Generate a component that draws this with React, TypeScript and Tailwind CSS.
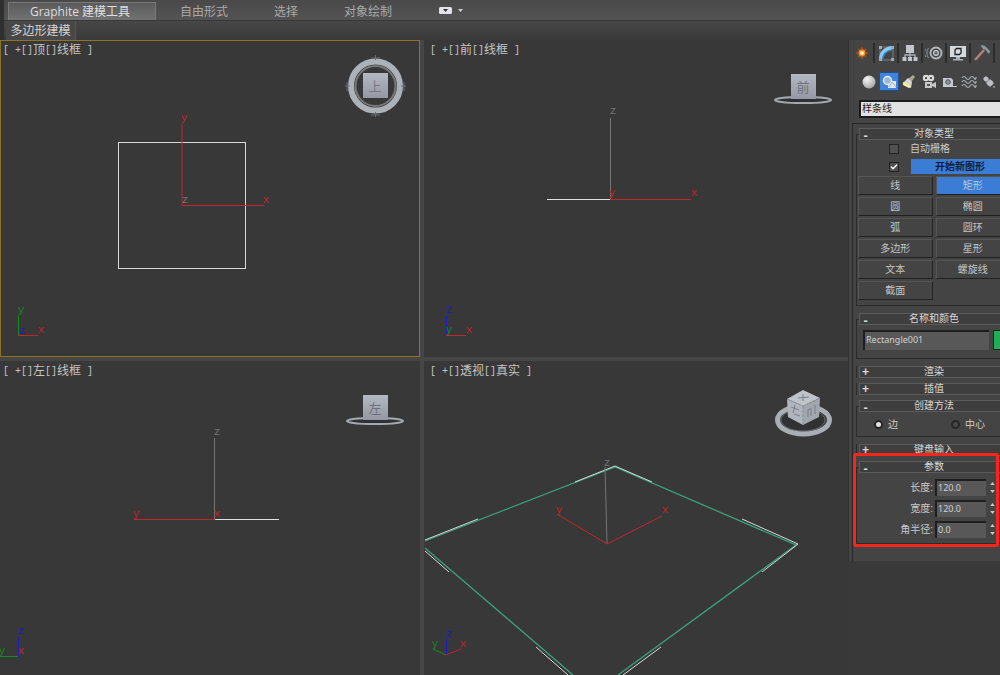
import React, { useState } from 'react';
import { Check } from 'lucide-react';
import { clsx } from 'clsx';

const CJK = "font-['Liberation_Sans','Noto_Sans_CJK_SC',sans-serif]";
const LATIN = "font-['Noto_Sans','Noto_Sans_CJK_SC',sans-serif]";

const RED = '#c2252a';
const GREEN = '#128a1c';
const BLUE = '#1d1dc4';
const GRAY = '#747474';

type Point = [number, number];

interface AxisProps {
  from?: Point;
  to?: Point;
  label: string;
  at: Point;
  color: string;
}

function Axis({ from, to, label, at, color }: AxisProps) {
  return (
    <g>
      {from && to && <line x1={from[0]} y1={from[1]} x2={to[0]} y2={to[1]} stroke={color} />}
      <text
        x={at[0]}
        y={at[1]}
        fill={color}
        textAnchor="middle"
        dominantBaseline="central"
        className="font-['Liberation_Mono',monospace] text-[11px]"
      >
        {label}
      </text>
    </g>
  );
}

function FlatCube({ x, y, face }: { x: number; y: number; face: string }) {
  return (
    <g>
      <ellipse cx={x} cy={y + 14} rx="28" ry="3" fill="#2f3033" stroke="#a4a8af" strokeWidth="2" />
      <rect x={x - 12} y={y - 12} width="25" height="25" fill="url(#cubeFace)" />
      <text x={x} y={y + 1} fill="#6f727b" textAnchor="middle" dominantBaseline="central" className={clsx(CJK, 'text-[13px]')}>
        {face}
      </text>
    </g>
  );
}

interface ViewportProps {
  name: string;
  mode: string;
  active?: boolean;
  inset?: boolean;
  children: React.ReactNode;
}

function Viewport({ name, mode, active, inset, children }: ViewportProps) {
  return (
    <section className={clsx('relative min-w-0 overflow-hidden bg-[#383838]', active && 'ring-1 ring-inset ring-[#8c7423]')}>
      <svg className="absolute inset-0 h-full w-full" fill="none">
        {children}
      </svg>
      <h2
        className={clsx(
          "relative flex pt-[3px] font-['Liberation_Mono','Noto_Sans_CJK_SC',monospace] text-[10px] leading-4 whitespace-pre text-[#c4c4c4]",
          inset ? 'pl-[6px]' : 'pl-[3px]'
        )}
      >
        [ +[]<span className="text-xs leading-4">{name}</span>[]<span className="text-xs leading-4">{mode}</span> ]
      </h2>
    </section>
  );
}

function TopView() {
  return (
    <Viewport name="顶" mode="线框" active>
      <defs>
        <linearGradient id="cubeFace" x1="0" y1="0" x2="0" y2="1">
          <stop offset="0" stopColor="#b4b8c2" />
          <stop offset="1" stopColor="#9598a2" />
        </linearGradient>
      </defs>
      <rect x="118.5" y="102.5" width="127" height="126" stroke="#d8d8d8" />
      <Axis label="z" at={[185, 160]} color={GRAY} />
      <Axis from={[182, 165.5]} to={[182, 84]} label="y" at={[184, 78]} color={RED} />
      <Axis from={[182, 165.5]} to={[264, 165.5]} label="x" at={[266, 160]} color={RED} />
      <Axis from={[18.5, 296]} to={[18.5, 276]} label="y" at={[21, 270]} color={GREEN} />
      <Axis from={[18, 295.5]} to={[38, 295.5]} label="x" at={[41, 290]} color={RED} />
      <Axis label="z" at={[22, 291]} color={BLUE} />
      {/* compass ring */}
      <circle cx="375.5" cy="46" r="20" stroke="#77797d" strokeWidth="2" />
      <circle cx="375.5" cy="46" r="24.5" stroke="#adb2b8" strokeWidth="6" />
      <path d="M375.5 15v5M371 18h9M375.5 72v5M371 75h9M345 46h5M347 42v9M401 46h5M404 42v9" stroke="#6a6e74" />
      <rect x="363" y="33" width="25" height="25" fill="url(#cubeFace)" />
      <text x="375" y="46" fill="#777a84" textAnchor="middle" dominantBaseline="central" className={clsx(CJK, 'text-[13px]')}>
        上
      </text>
    </Viewport>
  );
}

function FrontView() {
  return (
    <Viewport name="前" mode="线框" inset>
      <path d="M123 159.5H186" stroke="#e0e0e0" />
      <Axis from={[186.5, 159]} to={[186.5, 78]} label="z" at={[189, 71]} color={GRAY} />
      <Axis from={[186, 159.5]} to={[267, 159.5]} label="x" at={[270, 153]} color={RED} />
      <Axis label="y" at={[188, 153]} color={RED} />
      <Axis from={[22.5, 296]} to={[22.5, 276]} label="z" at={[25, 270]} color={BLUE} />
      <Axis from={[22, 295.5]} to={[42, 295.5]} label="x" at={[45, 290]} color={RED} />
      <Axis label="y" at={[25, 290]} color={GREEN} />
      <FlatCube x={379} y={46} face="前" />
    </Viewport>
  );
}

function LeftView() {
  return (
    <Viewport name="左" mode="线框">
      <path d="M215 158.5H279" stroke="#e0e0e0" />
      <Axis from={[214.5, 158]} to={[214.5, 77]} label="z" at={[217, 71]} color={GRAY} />
      <Axis from={[215, 158.5]} to={[134, 158.5]} label="y" at={[136, 153]} color={RED} />
      <Axis label="x" at={[217, 153]} color={RED} />
      <Axis from={[18.5, 296]} to={[18.5, 276]} label="z" at={[21, 270]} color={BLUE} />
      <Axis from={[18, 295.5]} to={[0, 295.5]} label="y" at={[2, 290]} color={GREEN} />
      <Axis label="x" at={[21, 290]} color={RED} />
      <FlatCube x={375} y={46} face="左" />
    </Viewport>
  );
}

function PerspectiveView() {
  return (
    <Viewport name="透视" mode="真实" inset>
      <path d="M1 180 191 106 372 184 194 314M1 187 149 314" stroke="#3da17c" strokeWidth="1.3" />
      <path
        d="M151 121 191 105 228 121M318 158 374 183 338 211M54 158 1 179M1 190 25 211M112 286 144 314M237 286 199 314"
        stroke="#d3dcd8"
      />
      <Axis from={[183, 183]} to={[181, 106]} label="z" at={[183, 102]} color={GRAY} />
      <Axis from={[183, 183]} to={[133, 153]} label="y" at={[135, 149]} color={RED} />
      <Axis from={[183, 183]} to={[238, 155]} label="x" at={[241, 149]} color={RED} />
      <Axis from={[22.5, 294]} to={[22.5, 278]} label="z" at={[25, 273]} color={BLUE} />
      <Axis from={[22, 294]} to={[9, 288]} label="y" at={[11, 283]} color={GREEN} />
      <Axis from={[22, 294]} to={[37, 288]} label="x" at={[39, 283]} color={RED} />
      {/* view cube on its compass */}
      <ellipse cx="379" cy="59" rx="22" ry="11" fill="#303133" stroke="#696b70" />
      <ellipse cx="379.5" cy="59" rx="26" ry="14" stroke="#a9aeb4" strokeWidth="5" />
      <path d="M379 29 363 38 379 45 396 37Z" fill="#bfc3ca" />
      <path d="M363 38 379 45V64L364 56Z" fill="#b0b4bc" />
      <path d="M396 37 379 45V64L395 56Z" fill="#a2a6af" />
      <path d="M363 38 379 45 396 37M379 45V64" stroke="#888c95" strokeDasharray="3 1" />
      <path
        d="M374 37 385 36M379 33V40M367 46 375 49M371 44 369 52M370 53 376 55M384 48V56M384 49 387 47V55M391 44V53"
        stroke="#7b7f88"
      />
    </Viewport>
  );
}

function Ribbon() {
  const tabs = [
    { name: '自由形式', pad: 'ml-6' },
    { name: '选择', pad: 'ml-[46px]' },
    { name: '对象绘制', pad: 'ml-[46px]' },
  ];
  return (
    <header className="shrink-0 border-l-4 border-[#2f2f2f] bg-[#424242]">
      <nav className="flex h-[21px] items-stretch border-b border-[#383838] bg-gradient-to-b from-[#494949] to-[#535353] pl-1 text-xs text-[#a9a9a9]">
        <button className="mt-[2px] w-[148px] border border-b-0 border-[#797979] bg-gradient-to-b from-[#5b5b5b] to-[#727272] pr-1 font-['Open_Sans','Noto_Sans_CJK_SC',sans-serif] leading-4 text-[#dedede]">
          Graphite 建模工具
        </button>
        {tabs.map((tab) => (
          <button key={tab.name} className={clsx(tab.pad, 'pt-[3px] leading-4')}>
            {tab.name}
          </button>
        ))}
        <button aria-label="显示选项" className="ml-[47px] flex items-center gap-[6px]">
          <svg width="13" height="7" viewBox="0 0 13 7">
            <rect width="13" height="7" rx="1.5" fill="#e2e2e8" />
            <path d="M4 2h5L6.5 5Z" fill="#333" />
          </svg>
          <svg width="5" height="3" viewBox="0 0 5 3">
            <path d="M0 0h5L2.5 3Z" fill="#ccc" />
          </svg>
        </button>
      </nav>
      <div className="flex h-[19px] bg-gradient-to-b from-[#474747] to-[#3a3a3a] pl-[2px]">
        <button className="w-[70px] border-r border-[#555] bg-[#484848] text-xs leading-4 text-[#d4d4d4]">多边形建模</button>
      </div>
    </header>
  );
}

const panelTabs = [
  {
    name: '创建',
    icon: (
      <>
        <circle cx="9" cy="9" r="5.5" fill="#a04a12" opacity=".45" />
        <path d="M9 3v12M3 9h12M5 5l8 8M13 5l-8 8" stroke="#b8642a" strokeWidth=".8" />
        <circle cx="9" cy="9" r="3.4" fill="#f08a2c" />
        <circle cx="9" cy="9" r="2" fill="#ffeaa0" />
      </>
    ),
  },
  {
    name: '修改',
    icon: (
      <>
        <path d="M3 3h13M3 3v13M3 16h13V3" stroke="#8b98a0" strokeWidth=".7" />
        <path d="M4 16C4 9 8 5 15 4" stroke="#8fc9ee" strokeWidth="4" />
        <path d="M5.5 16C6 10 9 7 15 6" stroke="#2e7fc0" strokeWidth="1.5" />
        <path d="M2 2h3v3H2zM14 2h3v3h-3zM2 14h3v3H2zM14 14h3v3h-3z" fill="#9fa9ae" />
      </>
    ),
  },
  {
    name: '层次',
    icon: (
      <>
        <path d="M5 1h8v8H5z" fill="#c3c6ca" />
        <path d="M9 9v5M4 14v-3h10v3" stroke="#a9adb0" strokeWidth="1.3" />
        <path d="M1.5 13h4v4h-4zM7 13h4v4H7zM12.5 13h4v4h-4z" fill="#c3c6ca" />
      </>
    ),
  },
  {
    name: '运动',
    icon: (
      <>
        <path d="M1 5c-2 3-2 5 0 8M3.5 4c-2 3-2 7 0 10" stroke="#8196a3" />
        <circle cx="11" cy="9" r="5.5" stroke="#b4bcc2" strokeWidth="1.8" />
        <circle cx="11" cy="9" r="2.4" stroke="#c9ced2" strokeWidth="1.2" fill="#666" />
      </>
    ),
  },
  {
    name: '显示',
    icon: (
      <>
        <path d="M1 2h16v11H1z" fill="#d5d9dc" />
        <path d="M6 6l1.5-1.5H12V9l-1.5 1.5H6z" fill="#d5d9dc" stroke="#222" strokeWidth="1.3" />
        <path d="M7 13h4v2H7zM4 15h10v1.5H4z" fill="#a9b4bb" />
      </>
    ),
  },
  {
    name: '实用程序',
    icon: (
      <>
        <path d="M2 16 11 6" stroke="#b58078" strokeWidth="2.5" />
        <path d="M6 3l3-2 3 1 5 5-1 3-2-2-1-2-3-1-2-3Z" fill="#8f989c" />
      </>
    ),
  },
];

const categories = [
  { name: '几何体', icon: <circle cx="9" cy="9" r="6.5" fill="url(#ball)" /> },
  {
    name: '图形',
    icon: (
      <>
        <path d="M8 8h8v7H8z" fill="#dfe6ee" />
        <circle cx="7.5" cy="7.5" r="4" fill="#9db7d8" stroke="#e9edf2" strokeWidth="1.5" />
        <path d="M9 14 12 9l4 5" stroke="#9eb3c8" />
      </>
    ),
  },
  {
    name: '灯光',
    icon: (
      <>
        <path d="M13 2l2 2-4 5-3-3Z" fill="#a8a89c" />
        <path d="M8 5l4 4-1 6-8-5Z" fill="#dedacb" />
        <path d="M3 9l8 5-2 1-6-3Z" fill="#fff3a8" />
      </>
    ),
  },
  {
    name: '摄影机',
    icon: (
      <>
        <circle cx="6" cy="5" r="3.2" fill="#dadada" />
        <circle cx="11" cy="5" r="3.2" fill="#dadada" />
        <path d="M5 9h7v6H5zM12 11l4-2v6l-4-2z" fill="#c9c9c9" />
        <path d="M5 4h2v2H5zM10 4h2v2h-2zM7 11h3v2H7z" fill="#555" />
      </>
    ),
  },
  {
    name: '辅助对象',
    icon: (
      <>
        <path d="M3 5h8l2 2v7H3z" fill="#c5c8ce" />
        <circle cx="8" cy="9" r="2.3" fill="#8d95a0" stroke="#555" />
        <path d="M13 13.5h4" stroke="#ccc" />
      </>
    ),
  },
  {
    name: '空间扭曲',
    icon: (
      <path
        d="M2 5q2-3 4 0t4 0 4 0 2-1M2 9q2-3 4 0t4 0 4 0 2-1M2 13q2-3 4 0t4 0 4 0 2-1"
        stroke="#aeb4b7"
        strokeWidth="1.2"
      />
    ),
  },
  {
    name: '系统',
    icon: (
      <>
        <circle cx="6" cy="6" r="2.3" fill="#c9cbd0" />
        <circle cx="10" cy="10" r="3" fill="#c4c6ca" />
        <path d="M6 3v6M3 6h6M10 6v8M6 10h8" stroke="#b5b7bc" />
        <circle cx="14" cy="14" r="1" fill="#999" />
      </>
    ),
  },
];

function PanelToolbar() {
  const [category, setCategory] = useState('图形');
  return (
    <div>
      <div className="flex h-[23px] items-end pl-[2px]">
        {panelTabs.map((tab) => (
          <button key={tab.name} aria-label={tab.name} className="flex h-5 w-6 items-center justify-center border-r-2 border-[#2c2c2c]">
            <svg width="18" height="18" viewBox="0 0 18 18" fill="none" className="shrink-0">
              {tab.icon}
            </svg>
          </button>
        ))}
      </div>
      <div className="flex pt-[9px] pl-[10px]">
        {categories.map((item) => (
          <button
            key={item.name}
            aria-label={item.name}
            onClick={() => setCategory(item.name)}
            className={clsx('flex h-[19px] w-5 items-center justify-center', category === item.name && 'border border-[#1f4f8c] bg-[#3f83dc]')}
          >
            <svg width="18" height="18" viewBox="0 0 18 18" fill="none" className="shrink-0">
              <defs>
                <radialGradient id="ball" cx=".35" cy=".3" r=".7">
                  <stop offset="0" stopColor="#f5f5f5" />
                  <stop offset="1" stopColor="#aaa" />
                </radialGradient>
              </defs>
              {item.icon}
            </svg>
          </button>
        ))}
      </div>
      <select
        aria-label="子类别"
        className="mt-[9px] ml-[10px] block h-[18px] w-[155px] appearance-none border-2 border-[#1c1c1c] bg-[#e2e2e2] pl-px text-[10px] leading-[14px] text-[#1c1c1c]"
      >
        <option>样条线</option>
        <option>NURBS 曲线</option>
      </select>
    </div>
  );
}

interface RolloutProps {
  title: string;
  open?: boolean;
  className?: string;
  children?: React.ReactNode;
}

function Rollout({ title, open, className, children }: RolloutProps) {
  return (
    <section className={clsx('relative', className)}>
      <button
        aria-expanded={!!open}
        className="relative z-10 mx-[3px] flex h-3 w-[150px] items-center justify-center border border-[#5b5b5b] bg-[#3e3e3e] text-[10px] leading-[10px] text-[#d8d8d8]"
      >
        <span
          className={clsx(
            "absolute left-[2px] font-['Liberation_Mono',monospace] text-xs leading-[10px] font-bold",
            open ? 'top-[3px]' : 'top-px'
          )}
        >
          {open ? '-' : '+'}
        </span>
        {title}
      </button>
      {open ? (
        <div className="-mt-[6px] border border-[#2b2b2b] pt-[5px]">{children}</div>
      ) : (
        <div className="absolute inset-x-0 top-0 h-3 border-x border-[#2b2b2b]" />
      )}
    </section>
  );
}

function Tick({ label, checked, onChange }: { label: string; checked: boolean; onChange: () => void }) {
  return (
    <span className="relative ml-8 flex h-[10px] w-[10px] items-center justify-center">
      <input
        type="checkbox"
        aria-label={label}
        checked={checked}
        onChange={onChange}
        className="absolute inset-0 appearance-none border border-[#222] bg-[#505050]"
      />
      {checked && <Check className="pointer-events-none relative h-2 w-2 text-white" strokeWidth={4} />}
    </span>
  );
}

function ObjectType() {
  const shapes = ['线', '矩形', '圆', '椭圆', '弧', '圆环', '多边形', '星形', '文本', '螺旋线', '截面'];
  const [shape, setShape] = useState('矩形');
  const [autoGrid, setAutoGrid] = useState(false);
  const [startNew, setStartNew] = useState(true);

  return (
    <Rollout title="对象类型" open>
      <div className="flex h-[17px] items-center text-[10px] text-[#cacaca]">
        <Tick label="自动栅格" checked={autoGrid} onChange={() => setAutoGrid(!autoGrid)} />
        <span className="ml-[11px]">自动栅格</span>
      </div>
      <div className="flex h-[19px] items-center">
        <Tick label="开始新图形" checked={startNew} onChange={() => setStartNew(!startNew)} />
        <button className="ml-3 h-[15px] w-[98px] bg-[#3b7dd4] text-[10px] leading-[15px] font-bold text-[#10203a]">开始新图形</button>
      </div>
      <div className="grid grid-cols-2 gap-x-[3px] gap-y-[2px] px-px pb-[5px] text-[10px]">
        {shapes.map((name) => (
          <button
            key={name}
            onClick={() => setShape(name)}
            className={clsx(
              'h-[19px] border border-t-[#555] border-r-[#222] border-b-[#222] border-l-[#555] leading-[18px]',
              shape === name ? 'bg-[#3b7dd4] text-[#b9c8dc]' : 'text-[#c6c6c6]'
            )}
          >
            {name}
          </button>
        ))}
      </div>
    </Rollout>
  );
}

function SpinnerField({ id, label, value }: { id: string; label: string; value: string }) {
  return (
    <div className="flex h-5 items-center">
      <label htmlFor={id} className="w-[78px] pr-[2px] text-right text-[10px] text-[#cacaca]">
        {label}:
      </label>
      <input
        id={id}
        defaultValue={value}
        className={clsx(LATIN, 'h-[17px] w-[51px] border-t-2 border-l-2 border-[#1e1e1e] bg-[#585858] pb-[2px] pl-px text-[9px] leading-3 text-[#d0d0d0]')}
      />
      <div className="ml-[2px] flex flex-col gap-[3px]">
        <button aria-label={`${label} +`} className="flex h-[5px] w-2 items-center justify-center">
          <svg width="5" height="3" viewBox="0 0 6 4">
            <path d="M0 4h6L3 0Z" fill="#c9c9c9" />
          </svg>
        </button>
        <button aria-label={`${label} -`} className="flex h-[5px] w-2 items-center justify-center">
          <svg width="5" height="3" viewBox="0 0 6 4">
            <path d="M0 0h6L3 4Z" fill="#c9c9c9" />
          </svg>
        </button>
      </div>
    </div>
  );
}

function CommandPanel() {
  const [method, setMethod] = useState('边');

  return (
    <aside className="w-[152px] shrink-0 overflow-hidden">
      <div className="w-[170px] border-l border-[#323232] bg-[#444]">
        <PanelToolbar />
        <div className="mt-[5px] ml-[3px] w-[164px] border-t border-l border-[#262626] pt-1 pb-[17px] pl-[3px]">
          <div className="w-[156px]">
            <ObjectType />

            <Rollout title="名称和颜色" open className="mt-[7px]">
              <div className="flex items-center gap-1 pt-[5px] pb-[8px] pl-[6px]">
                <input
                  aria-label="名称"
                  defaultValue="Rectangle001"
                  className={clsx(LATIN, 'h-5 w-[126px] border-t-2 border-l-2 border-[#1e1e1e] bg-[#585858] pb-1 pl-px text-[9px] text-[#d0d0d0]')}
                />
                <button aria-label="颜色" className="h-5 w-[18px] border border-[#222] bg-[#1fae54]" />
              </div>
            </Rollout>

            <Rollout title="渲染" className="mt-[7px]" />
            <Rollout title="插值" className="mt-[5px]" />

            <Rollout title="创建方法" open className="mt-[5px]">
              <div className="flex h-6 items-center pl-[17px] text-[10px] text-[#cacaca]">
                {['边', '中心'].map((name) => (
                  <label key={name} className="flex w-[77px] shrink-0 items-center gap-[5px]">
                    <input
                      type="radio"
                      name="method"
                      checked={method === name}
                      onChange={() => setMethod(name)}
                      className="h-[9px] w-[9px] appearance-none rounded-full border-2 border-[#262626] bg-[#484848] checked:bg-[#e4e4e4]"
                    />
                    {name}
                  </label>
                ))}
              </div>
            </Rollout>

            <Rollout title="键盘输入" className="mt-[7px]" />

            <div className="relative mt-[5px]">
              <Rollout title="参数" open>
                <div className="flex flex-col gap-px pt-1 pb-1">
                  <SpinnerField id="length" label="长度" value="120.0" />
                  <SpinnerField id="width" label="宽度" value="120.0" />
                  <SpinnerField id="corner" label="角半径" value="0.0" />
                </div>
              </Rollout>
              {/* callout around the parameters */}
              <div className="pointer-events-none absolute -top-2 -bottom-[3px] -left-[3px] z-20 w-[146px] rounded-[3px] border-3 border-[#f5261c]" />
            </div>
          </div>
        </div>
      </div>
    </aside>
  );
}

export default function App() {
  return (
    <div className={clsx(CJK, 'flex h-screen flex-col overflow-hidden bg-[#393939]')}>
      <Ribbon />
      <div className="flex min-h-0 flex-1">
        <main className="grid min-w-0 flex-1 grid-cols-[420fr_424fr] grid-rows-[317fr_314fr] gap-1 bg-[#464646]">
          <TopView />
          <FrontView />
          <LeftView />
          <PerspectiveView />
        </main>
        <CommandPanel />
      </div>
    </div>
  );
}
